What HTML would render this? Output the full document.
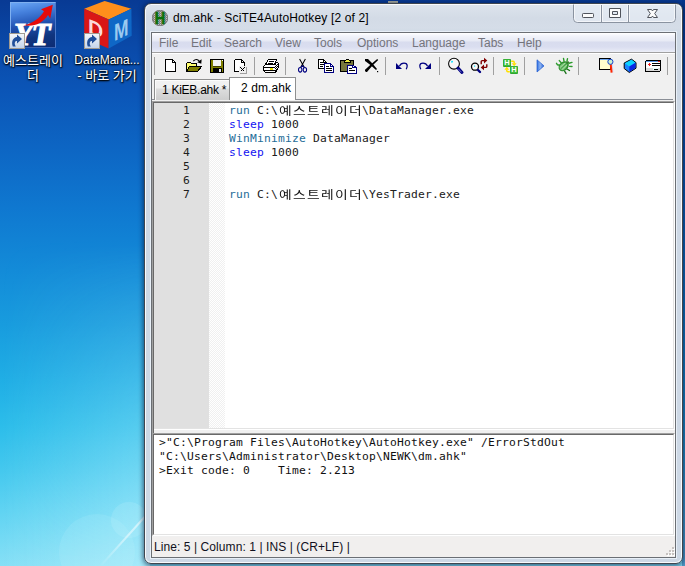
<!DOCTYPE html>
<html lang="ko">
<head>
<meta charset="utf-8">
<title>dm.ahk - SciTE4AutoHotkey</title>
<style>
*{margin:0;padding:0;box-sizing:border-box}
html,body{width:685px;height:566px;overflow:hidden}
body{position:relative;font-family:"Liberation Sans","Noto Sans CJK KR",sans-serif;font-size:12px;color:#000;
background:#0b57b8}
.abs{position:absolute}
#wall{left:0;top:0;width:685px;height:566px;
background:linear-gradient(180deg,#083a94 0px,#0a49a8 45px,#0b55b7 90px,#0d66c4 150px,#0f78d0 208px,#138bd8 270px,#189cde 325px,#20aee5 380px,#2cbdea 426px,#44c8ee 470px,#5fd3f2 510px,#86e0f6 566px)}
#wall2{left:0;top:0;width:150px;height:566px;background:linear-gradient(90deg,rgba(200,245,255,0) 0,rgba(200,245,255,.5) 150px);-webkit-mask-image:linear-gradient(180deg,rgba(0,0,0,0) 240px,rgba(0,0,0,.55) 420px,#000 566px);mask-image:linear-gradient(180deg,rgba(0,0,0,0) 240px,rgba(0,0,0,.55) 420px,#000 566px)}
#flare{left:111px;top:502px;width:36px;height:36px;border-radius:50%;background:rgba(225,252,255,.14)}
#flare2{left:59px;top:514px;width:76px;height:76px;border-radius:50%;background:rgba(225,252,255,.10)}
#streak{left:88px;top:540px;width:70px;height:2px;background:linear-gradient(90deg,rgba(255,255,255,0),rgba(255,255,255,.45) 50%,rgba(255,255,255,.6));transform:rotate(-48deg);transform-origin:50% 50%}
/* desktop icons */
.dlabel{color:#fff;text-align:center;line-height:15px;font-size:12px;
text-shadow:0 1px 2px rgba(0,0,0,.95),0 0 2px rgba(0,0,0,.8),1px 1px 1px rgba(0,0,0,.7)}
/* window */
#win{left:144px;top:3px;width:539px;height:561px;border:1px solid #3f4650;border-radius:7px;
background:linear-gradient(180deg,#dde4ed 0,#d3dbe6 14px,#d5dde8 24px,#cdd8e5 30px,#cdd8e5 100%);
box-shadow:inset 0 0 0 1px rgba(255,255,255,.85),0 1px 5px 1px rgba(0,15,50,.6)}
#title{left:173px;top:10px;font-size:12px;line-height:16px;white-space:nowrap;color:#000;letter-spacing:.15px}
#client{left:151px;top:32px;width:525px;height:526px;border:1px solid #6b6f74;background:#f0f0f0;
box-shadow:0 0 0 1px #e8eff7}
#menu{left:152px;top:33px;width:523px;height:19px;
background:linear-gradient(180deg,#ffffff 0,#fbfcfe 1px,#f1f3fa 3px,#e7eaf5 8px,#d8dcee 9px,#dadef0 14px,#e3e6f4 17px,#eef0f8 19px)}
#menu span{position:absolute;top:2px;line-height:16px;color:#74747c;font-size:12px}
#menuline{left:152px;top:52px;width:523px;height:1px;background:#a0a0a0}
#menuline2{left:152px;top:53px;width:523px;height:1px;background:#fff}
.sep{position:absolute;top:57px;width:1px;height:18px;background:#a0a0a0}
.ico{position:absolute;top:57px;width:16px;height:16px;overflow:visible}
/* tabs */
.tab{position:absolute;font-size:12px;line-height:16px;white-space:nowrap}
#tab1{left:154px;top:79px;width:76px;height:21px;border:1px solid #8e8f8f;border-bottom:none;
background:linear-gradient(180deg,#f2f2f2 0,#f0f0f0 8px,#dddddd 9px,#cfcfcf 19px);box-shadow:inset 1px 1px 0 #fcfcfc}
#tab2{left:229px;top:77px;width:67px;height:23px;border:1px solid #8e8f8f;border-bottom:none;background:#fff}
#tabline{left:152px;top:99px;width:521px;height:1px;background:#8a8e96}
/* editor */
#edborder{left:152px;top:101px;width:523px;height:329px;border:1px solid;border-color:#a0a0a0 #fff #fff #a0a0a0;background:#fff}
#edinner{left:153px;top:102px;width:521px;height:327px;border:1px solid;border-color:#696969 #e3e3e3 #e3e3e3 #696969;background:#fff}
#lnmargin{left:154px;top:103px;width:55px;height:325px;background:#e0e0e0}
#foldmargin{left:209px;top:103px;width:16px;height:325px;background:#f8f8f8;
background-image:linear-gradient(45deg,#f0f0f0 25%,transparent 25%,transparent 75%,#f0f0f0 75%),linear-gradient(45deg,#f0f0f0 25%,transparent 25%,transparent 75%,#f0f0f0 75%);background-size:2px 2px;background-position:0 0,1px 1px;background-color:#fff}
.mono{font-family:"DejaVu Sans Mono","Liberation Mono","Noto Sans CJK KR",monospace;font-size:11.3px;letter-spacing:.197px;line-height:14px;white-space:pre;margin-top:1px}
.ln{position:absolute;left:154px;width:36px;text-align:right;color:#202020}
.cl{position:absolute;left:229px;color:#202020}
.kw{color:#1f6e99}.cm{color:#1414f2}
.ko{display:inline-block;width:84px;height:14px;vertical-align:top;position:relative}
.ko i{position:absolute;left:1px;top:-1px;font-style:normal;font-family:"Noto Sans CJK KR",sans-serif;font-size:11.5px;line-height:14px;letter-spacing:1.09px;transform:scale(1.2,.95);transform-origin:0 60%;white-space:nowrap;color:#101010}
/* output */
#outborder{left:152px;top:433px;width:523px;height:103px;border:1px solid;border-color:#a0a0a0 #fff #fff #a0a0a0;background:#fff}
#outinner{left:153px;top:434px;width:521px;height:101px;border:1px solid;border-color:#696969 #e3e3e3 #e3e3e3 #696969;background:#fff}
.ol{position:absolute;left:159px;color:#101010}
/* status */
#status{left:152px;top:537px;width:523px;height:20px;background:#f1efee}
#stext{left:154px;top:539px;line-height:16px;font-size:12px;white-space:nowrap;color:#101020;letter-spacing:.08px}
</style>
</head>
<body>
<div id="wall" class="abs"></div><div id="wall2" class="abs"></div><div id="flare2" class="abs"></div><div id="flare" class="abs"></div><div id="streak" class="abs"></div><div class="abs" style="left:682px;top:0;width:3px;height:566px;background:rgba(0,50,130,.4)"></div>

<!-- desktop icon 1 -->
<div class="abs" style="left:10px;top:2px;width:46px;height:46px;background:linear-gradient(170deg,#6aa6f5 0%,#4580dc 22%,#1f4fae 50%,#10357f 75%,#0d2c74 100%);border:1px solid #7fb0f0;border-right-color:#4a78c8;border-bottom-color:#3c62b0;overflow:hidden">
  <div class="abs" style="left:3px;top:16px;font-family:'Liberation Serif',serif;font-style:italic;font-weight:bold;font-size:31px;line-height:31px;color:#fff;letter-spacing:-1.5px;-webkit-text-stroke:1.1px #fff">YT</div>
  <svg class="abs" style="left:-1px;top:-1px" width="46" height="46" viewBox="0 0 46 46"><path d="M13.5 23.3C23 21.5 30 16 34 9.3L31 7.3L42.8 2.8L40.3 16.5L38 13C33 21 24 25.3 13.5 23.3Z" fill="#e60a0a"/></svg>
</div>
<svg class="abs" style="left:9px;top:33px" width="16" height="16" viewBox="0 0 16 16"><defs><linearGradient id="sc" x1="0" y1="0" x2="0" y2="1"><stop offset="0" stop-color="#f4f7fb"/><stop offset="1" stop-color="#c4d4ea"/></linearGradient></defs><rect x=".5" y=".5" width="15" height="15" fill="url(#sc)" stroke="#a09a90"/><path d="M3.8 13.5C2 8.5 4 4.5 8 4L8 1.5L13 6L8 10.5L8 8C6 8 4.8 10 6.8 13.5Z" fill="#1f4e9a"/></svg>
<div class="abs dlabel" style="left:-2px;top:53px;width:70px;font-size:13px">예스트레이<br>더</div>

<!-- desktop icon 2 -->
<svg class="abs" style="left:82px;top:0" width="54" height="52" viewBox="82 0 54 52">
  <polygon points="84.2,8.7 104.6,1 131.4,8.7 108.7,19.4" fill="#ff8f1c"/>
  <polygon points="84.2,8.7 108.7,19.4 108.7,48.6 84.2,38" fill="#d91616"/>
  <polygon points="108.7,19.4 131.4,8.7 131.7,35.8 108.7,48.6" fill="#0f67c6"/>
  <text x="0" y="0" transform="matrix(1,0.42,0,1,88,33)" font-family="Liberation Sans, sans-serif" font-weight="bold" font-size="21" fill="#fbd9d9">D</text>
  <text x="0" y="0" transform="matrix(1,-0.47,0,1,114,41.3)" font-family="Liberation Sans, sans-serif" font-weight="bold" font-size="23.5" fill="#9ccaf0" textLength="14.5" lengthAdjust="spacingAndGlyphs">M</text>
</svg>
<svg class="abs" style="left:84px;top:33px" width="16" height="16" viewBox="0 0 16 16"><rect x=".5" y=".5" width="15" height="15" fill="url(#sc)" stroke="#a09a90"/><path d="M3.8 13.5C2 8.5 4 4.5 8 4L8 1.5L13 6L8 10.5L8 8C6 8 4.8 10 6.8 13.5Z" fill="#1f4e9a"/></svg>
<div class="abs dlabel" style="left:70px;top:53px;width:74px">DataMana...<br><span style="font-size:13px">- 바로 가기</span></div>

<!-- window -->
<div class="abs" style="left:388px;top:1px;width:10px;height:2px;background:rgba(225,215,165,.75)"></div>
<div id="win" class="abs"></div>
<svg class="abs" style="left:152px;top:10px" width="16" height="16" viewBox="0 0 16 16">
<defs><pattern id="spk" width="2" height="2" patternUnits="userSpaceOnUse"><rect width="2" height="2" fill="#7c7c7c"/><rect width="1" height="1" fill="#c8c8c8"/><rect x="1" y="1" width="1" height="1" fill="#9c9c9c"/></pattern></defs>
<circle cx="8" cy="8" r="7.8" fill="url(#spk)" stroke="#707070" stroke-width=".8"/>
<text x="8" y="0" transform="translate(0 14.2) scale(1 1.17)" text-anchor="middle" font-family="Liberation Sans, sans-serif" font-weight="bold" font-size="14.600" fill="#0a700a" stroke="#0a700a" stroke-width=".5">H</text></svg>
<svg class="abs" style="left:570px;top:3px" width="110" height="24" viewBox="570 3 110 24">
<path d="M573.5 4.5V18.5Q573.5 22.5 577.5 22.5H671.5Q675.5 22.5 675.5 18.5V4.5" fill="rgba(235,240,247,.55)" stroke="#8a93a0" stroke-width="1"/>
<path d="M601.5 5V22M628.5 5V22" stroke="#8a93a0" stroke-width="1"/>
<path d="M574.5 5V18.5Q574.5 21.5 577.5 21.5H600.5V5M602.5 5V21.5H627.5V5M629.5 5V21.5H671.5Q674.5 21.5 674.5 18.5V5" fill="none" stroke="rgba(255,255,255,.6)"/>
<rect x="582.5" y="13.5" width="11" height="4" rx=".8" fill="#fcfcfc" stroke="#50545c"/>
<path d="M609.5 8.5H620.5V17.5H609.5ZM612.5 11.5V14.5H617.5V11.5Z" fill="#fcfcfc" fill-rule="evenodd" stroke="#50545c" stroke-linejoin="round"/>
<path d="M647.5 9.5H651.5L652.5 11L653.5 9.5H657.5L654.7 13.5L657.5 17.5H653.5L652.5 16L651.5 17.5H647.5L650.3 13.5Z" fill="#fcfcfc" stroke="#50545c" stroke-linejoin="round"/>
</svg>
<div id="title" class="abs">dm.ahk - SciTE4AutoHotkey [2 of 2]</div>
<div id="client" class="abs"></div>
<div id="menu" class="abs">
  <span style="left:7px">File</span><span style="left:39px">Edit</span><span style="left:72px">Search</span><span style="left:123px">View</span><span style="left:162px">Tools</span><span style="left:205px">Options</span><span style="left:260px">Language</span><span style="left:326px">Tabs</span><span style="left:365px">Help</span>
</div>
<div id="menuline" class="abs"></div><div id="menuline2" class="abs"></div>

<!-- TOOLBAR -->
<!--TB0--><svg class="abs" style="left:152px;top:54px" width="523" height="24" viewBox="152 54 523 24">
<g shape-rendering="crispEdges">
<!-- separators -->
<g fill="#a0a0a0"><rect x="154" y="57" width="1" height="18"/><rect x="254" y="57" width="1" height="18"/><rect x="285" y="57" width="1" height="18"/><rect x="385" y="57" width="1" height="18"/><rect x="439" y="57" width="1" height="18"/><rect x="493" y="57" width="1" height="18"/><rect x="524" y="57" width="1" height="18"/><rect x="578" y="57" width="1" height="18"/><rect x="667" y="57" width="1" height="18"/></g>
<!-- new -->
<path d="M165.5 59.5H172.5L175.5 62.5V71.5H165.5Z" fill="#fff" stroke="#000"/><path d="M172.5 59.5V62.5H175.5" fill="none" stroke="#000"/>
<!-- open -->
<path d="M186.5 71.5V63.5L187.5 62.5H190.5L191.5 63.5H196.5V66.5H189.5Z" fill="#ffff70" stroke="#000"/>
<path d="M186.5 71.5L189.5 66.5H201.5L197.5 71.5Z" fill="#808000" stroke="#000"/>
</g><path d="M193.3 61.2Q196.5 57.8 199.6 61.5" fill="none" stroke="#000" stroke-width="1.1"/><path d="M197.3 62.3L201.6 59.3L201.3 63.8Z" fill="#000"/><g shape-rendering="crispEdges">
<!-- save -->
<rect x="210.5" y="59.5" width="13" height="13" fill="#808000" stroke="#000"/>
<rect x="213" y="60" width="8" height="6" fill="#f4f4f4"/><rect x="213" y="66" width="8" height="1" fill="#404000"/>
<rect x="213" y="68" width="9" height="4" fill="#000"/><rect x="219" y="69" width="2" height="3" fill="#e8e8e8"/><rect x="222" y="60" width="1" height="1" fill="#fff"/>
<!-- close doc -->
<path d="M234.5 59.5H241.5L244.5 62.5V65.5" fill="none" stroke="#000"/><path d="M234.5 59.5V71.5H239.5" fill="none" stroke="#000"/><path d="M241.5 59.5V62.5H244.5" fill="none" stroke="#000"/>
<rect x="235" y="60" width="6" height="11" fill="#fff"/><rect x="241" y="63" width="3" height="4" fill="#fff"/>
<rect x="240" y="67" width="7" height="7" fill="#a0a0a0"/><rect x="239" y="66" width="7" height="7" fill="#f0f0f0"/>
<path d="M240.5 67.5L244.5 71.5M244.5 67.5L240.5 71.5" stroke="#000" fill="none"/>
</g>
<!-- print -->
<g shape-rendering="crispEdges">
<path d="M263.5 66.5L265.5 64.5H274.5L276.5 62.5H277.5L278.5 63.5V67.5L276.5 70.5V71.5L275.5 72.5H265.5L263.5 70.5Z" fill="#fff" stroke="#000"/>
<path d="M265.5 64.5L268.5 59.5H276.5L274.5 64.5Z" fill="#fff" stroke="#000"/>
<rect x="269" y="61" width="5" height="1" fill="#000"/><rect x="268" y="63" width="5" height="1" fill="#000"/>
<rect x="264" y="67" width="11" height="1" fill="#000"/><rect x="264" y="70" width="12" height="1" fill="#000"/>
<rect x="270" y="68" width="3" height="2" fill="#e8e000"/>
<g fill="#000"><rect x="275" y="64" width="1" height="1"/><rect x="277" y="64" width="1" height="1"/><rect x="276" y="65" width="1" height="1"/><rect x="275" y="66" width="1" height="1"/><rect x="277" y="66" width="1" height="1"/><rect x="276" y="67" width="1" height="1"/><rect x="275" y="68" width="1" height="1"/><rect x="277" y="68" width="1" height="1"/><rect x="276" y="69" width="1" height="1"/><rect x="275" y="71" width="1" height="1"/></g>
</g>
<!-- cut -->
<g fill="none" stroke-width="1.050">
<path d="M299.6 59L304.2 67.3M305.4 59L300.8 67.3" stroke="#000"/>
<ellipse cx="300.2" cy="69.8" rx="1.7" ry="2.3" stroke="#000080"/><ellipse cx="304.9" cy="69.8" rx="1.7" ry="2.3" stroke="#000080"/>
<path d="M300.8 67.4L302.5 65.8L304.2 67.4" stroke="#000080"/>
</g>
<g shape-rendering="crispEdges">
<!-- copy -->
<path d="M318.5 59.5H323.5L326.5 62.5V68.5H318.5Z" fill="#fff" stroke="#000"/><path d="M323.5 59.5V62.5H326.5" fill="none" stroke="#000"/>
<rect x="320" y="62" width="3" height="1" fill="#000"/><rect x="320" y="64" width="4" height="1" fill="#000"/><rect x="320" y="66" width="3" height="1" fill="#000"/>
<path d="M324.5 63.5H330.5L333.5 66.5V72.5H324.5Z" fill="#fff" stroke="#000080"/><path d="M330.5 63.5V66.5H333.5" fill="none" stroke="#000080"/>
<rect x="326" y="66" width="3" height="1" fill="#000"/><rect x="326" y="68" width="6" height="1" fill="#000"/><rect x="326" y="70" width="6" height="1" fill="#000"/>
<!-- paste -->
<rect x="340.5" y="60.5" width="13" height="11" fill="#77773c" stroke="#000"/>
<path d="M344.5 62.5V61.5L346.5 59.5H348.5L350.5 61.5V62.5Z" fill="#f0f040" stroke="#000"/><rect x="344" y="62" width="7" height="1" fill="#000"/>
<path d="M347.5 65.5H353.5L356.5 67.5V73.5H347.5Z" fill="#fff" stroke="#000080"/><path d="M352.5 65.5V67.5H356.5" fill="none" stroke="#000080"/>
<rect x="349" y="68" width="3" height="1" fill="#000"/><rect x="349" y="70" width="6" height="1" fill="#000"/>
</g>
<!-- delete X -->
<path d="M365 59H368L372.5 63.5L377 69L376 70L371 65.5L366.5 62L365 61ZM365 69.8L371 64.3L377.2 59L378.2 60L372.5 65.5L367 72H366L365 71Z" fill="#000"/><rect x="377" y="71" width="1.2" height="1.2" fill="#000"/>
<!-- undo / redo -->
<g fill="#000080"><path d="M396 63V69H402Z"/><path d="M431 63V69H425Z"/></g>
<g fill="none" stroke="#000080" stroke-width="1.25"><path d="M399.5 66Q400.8 63 404 63Q407.2 63 407.2 65.8Q407.2 67.5 406.2 69.2"/><path d="M427.5 66Q426.2 63 423 63Q419.8 63 419.8 65.8Q419.8 67.5 420.8 69.2"/></g>
<!-- find -->
<circle cx="454" cy="63.7" r="5.4" fill="#f8f8f8" stroke="#000" stroke-width="1.050"/><path d="M451.5 62.5L452.5 61" stroke="#00e0ff" stroke-width="1.4" fill="none"/>
<path d="M458 68L462 72.5" stroke="#000080" stroke-width="3" stroke-linecap="round"/><path d="M458.3 68.8L461.5 72.3" stroke="#8a8ad8" stroke-width=".8"/>
<!-- replace -->
<circle cx="475" cy="66.7" r="3.5" fill="#f8f8f8" stroke="#000" stroke-width="1.3"/><rect x="474" y="65.5" width="1.2" height="1.2" fill="#00e0ff"/>
<path d="M478 70L480 72" stroke="#000080" stroke-width="2.4" stroke-linecap="round"/>
<g fill="none" stroke="#800000" stroke-width="1.4"><path d="M481.2 64.3V61.6Q481.2 60.6 482.2 60.6H484.5"/><path d="M486.8 64.3V66.4Q486.8 67.4 485.8 67.4H483.5"/></g>
<path d="M484 57.8L487.3 60.6L484 63.4Z" fill="#800000"/><path d="M484 64.6L480.7 67.4L484 70.2Z" fill="#800000"/>
<!-- HH -->
<rect x="503" y="59" width="8" height="8" rx="1" fill="#2fa52f"/><rect x="503.5" y="59.5" width="7" height="6.5" rx="1" fill="#3fc03f"/>
<rect x="510" y="66" width="8" height="8" rx="1" fill="#2fa52f"/><rect x="510.5" y="66.5" width="7" height="6.5" rx="1" fill="#3fc03f"/>
<text x="507" y="65.3" font-family="Liberation Sans, sans-serif" font-weight="bold" font-size="7.5" fill="#fff" text-anchor="middle">H</text>
<text x="514" y="72.3" font-family="Liberation Sans, sans-serif" font-weight="bold" font-size="7.5" fill="#fff" text-anchor="middle">H</text>
<path d="M511.2 61.3H513.2Q514.2 61.3 514.2 62.3V63.6" fill="none" stroke="#ffe000" stroke-width="1.5"/><path d="M511.8 63.3H516.6L514.2 66.2Z" fill="#ffe000"/>
<path d="M509.8 71.7H507.8Q506.8 71.7 506.8 70.7V69.4" fill="none" stroke="#ffe000" stroke-width="1.5"/><path d="M509.2 69.7H504.4L506.8 66.8Z" fill="#ffe000"/>
<!-- run -->
<defs><linearGradient id="rg" x1="0" y1="0" x2="1" y2="0"><stop offset="0" stop-color="#2f6fe0"/><stop offset=".45" stop-color="#8db4f2"/><stop offset="1" stop-color="#2a62d4"/></linearGradient></defs>
<path d="M537 59.8L544 65.9L537 72Z" fill="url(#rg)" stroke="#1f5bd0" stroke-width=".7" stroke-linejoin="round"/>
<!-- bug -->
<g stroke="#2a9a2a" stroke-width="1.4" fill="none" stroke-linecap="round">
<path d="M560 65.2L557.5 64.8L556.5 63.3M561.2 62.8L559.3 60.6M564 61.2L563.5 58.4M567 61.2L567.5 58.6M569 63.2L572 62.4M569.5 66.4L572 66.5"/>
<path d="M567 69L569.5 70.5M564.5 71L566 73.4" stroke="#187018"/></g>
<ellipse cx="563.7" cy="66.2" rx="5.7" ry="4.4" transform="rotate(-42 563.7 66.2)" fill="#2f902f"/>
<circle cx="568" cy="62.3" r="1.1" fill="#3a7a30"/>
<ellipse cx="563.3" cy="66.5" rx="4.1" ry="2.9" transform="rotate(-42 563.3 66.5)" fill="#74c074"/>
<path d="M560.3 67.3L565.3 62.8M562 69.6L567.2 64.8" stroke="#b4e0ac" stroke-width=".8" fill="none"/>
<path d="M561 68.6L566.4 63.7" stroke="#3c983c" stroke-width=".8" fill="none"/>
<!-- window+magnifier -->
<g shape-rendering="crispEdges"><rect x="599.5" y="58.5" width="11" height="11" fill="#ffffcc" stroke="#000"/><rect x="600" y="59" width="10" height="1" fill="#6ea8f0"/></g>
<path d="M612.3 64.5L612.9 72.5" stroke="#d8d8f8" stroke-width="1.2"/>
<path d="M610.7 64L611.6 72.7" stroke="#ff2800" stroke-width="2"/>
<circle cx="610.4" cy="61.8" r="2.6" fill="#c8f0d0" stroke="#1444d0" stroke-width="1"/>
<!-- cube -->
<path d="M631.5 59.2L636 62.6V68.2L629.3 72.5L624.2 68.5V63Z" fill="#1c84ff" stroke="#000" stroke-width="1" stroke-linejoin="round"/>
<path d="M631.5 59.8L635.5 62.8L629.3 66.6L624.8 63.2Z" fill="#0ad4ff"/>
<path d="M629.3 66.6L635.5 62.8V68L629.3 72Z" fill="#0a28e4"/>
<!-- window with plus -->
<g shape-rendering="crispEdges">
<rect x="645.5" y="60.5" width="15" height="11" rx="1.5" fill="#fff" stroke="#000"/>
<rect x="646" y="61" width="12" height="1" fill="#5a9ae8"/><rect x="658" y="61" width="2" height="1" fill="#e02020"/>
<rect x="648" y="64" width="3" height="1" fill="#f02020"/><rect x="649" y="63" width="1" height="3" fill="#f02020"/>
<rect x="652" y="63" width="8" height="1" fill="#000"/><rect x="652" y="65" width="8" height="1" fill="#000"/>
<rect x="646" y="68" width="14" height="3" fill="#d8d8d8"/><rect x="653" y="68" width="5" height="2" fill="#e8ffff"/><rect x="654" y="69" width="4" height="1" fill="#000"/>
</g>
</svg>
<!--TB1-->

<!-- tabs -->
<div id="tabline" class="abs"></div>
<div id="tab1" class="abs"></div>
<div id="tab2" class="abs"></div>
<div class="tab" style="left:162px;top:82px;letter-spacing:-.27px">1 KiEB.ahk *</div>
<div class="tab" style="left:241px;top:80px;letter-spacing:.08px">2 dm.ahk</div>

<!-- editor -->
<div id="edborder" class="abs"></div><div id="edinner" class="abs"></div>
<div id="lnmargin" class="abs"></div><div id="foldmargin" class="abs"></div>
<div class="mono ln" style="top:103px">1</div>
<div class="mono ln" style="top:117px">2</div>
<div class="mono ln" style="top:131px">3</div>
<div class="mono ln" style="top:145px">4</div>
<div class="mono ln" style="top:159px">5</div>
<div class="mono ln" style="top:173px">6</div>
<div class="mono ln" style="top:187px">7</div>
<div class="mono cl" style="top:103px"><span class="kw">run</span> C:\<span class="ko"><i>예스트레이더</i></span>\DataManager.exe</div>
<div class="mono cl" style="top:117px"><span class="cm">sleep</span> 1000</div>
<div class="mono cl" style="top:131px"><span class="kw">WinMinimize</span> DataManager</div>
<div class="mono cl" style="top:145px"><span class="cm">sleep</span> 1000</div>
<div class="mono cl" style="top:187px"><span class="kw">run</span> C:\<span class="ko"><i>예스트레이더</i></span>\YesTrader.exe</div>

<div class="abs" style="left:152px;top:428px;width:1px;height:7px;background:#a0a0a0"></div><div class="abs" style="left:153px;top:428px;width:1px;height:7px;background:#696969"></div>
<!-- output -->
<div id="outborder" class="abs"></div><div id="outinner" class="abs"></div>
<div class="mono ol" style="top:435px">&gt;"C:\Program Files\AutoHotkey\AutoHotkey.exe" /ErrorStdOut</div>
<div class="mono ol" style="top:449px">"C:\Users\Administrator\Desktop\NEWK\dm.ahk"</div>
<div class="mono ol" style="top:463px">&gt;Exit code: 0    Time: 2.213</div>

<!-- status -->
<div id="status" class="abs"></div>
<svg class="abs" style="left:664px;top:545px" width="12" height="12" viewBox="664 545 12 12" shape-rendering="crispEdges"><rect x="673" y="548" width="2" height="2" fill="#fff"/><rect x="672" y="547" width="2" height="2" fill="#c6c2c0"/><rect x="670" y="551" width="2" height="2" fill="#fff"/><rect x="669" y="550" width="2" height="2" fill="#c6c2c0"/><rect x="673" y="551" width="2" height="2" fill="#fff"/><rect x="672" y="550" width="2" height="2" fill="#c6c2c0"/><rect x="667" y="554" width="2" height="2" fill="#fff"/><rect x="666" y="553" width="2" height="2" fill="#c6c2c0"/><rect x="670" y="554" width="2" height="2" fill="#fff"/><rect x="669" y="553" width="2" height="2" fill="#c6c2c0"/><rect x="673" y="554" width="2" height="2" fill="#fff"/><rect x="672" y="553" width="2" height="2" fill="#c6c2c0"/></svg>
<div id="stext" class="abs">Line: 5 | Column: 1 | INS | (CR+LF) |</div>
</body>
</html>
